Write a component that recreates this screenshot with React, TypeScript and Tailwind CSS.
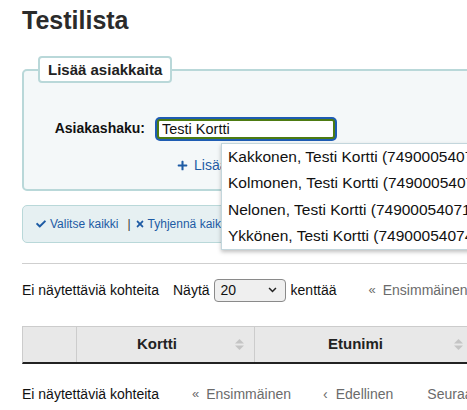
import { FaCheck, FaTimes, FaPlus } from "react-icons/fa";

const link = "text-[#1d5ba4]";

function SortIcon() {
  return (
    <svg width="9" height="11" viewBox="0 0 9 11" className="shrink-0">
      <path d="M4.5 0 L9 4.5 H0 Z" fill="#c4c4c4" />
      <path d="M4.5 11 L9 6.5 H0 Z" fill="#c4c4c4" />
    </svg>
  );
}

const suggestions = [
  "Kakkonen, Testi Kortti (74900054072)",
  "Kolmonen, Testi Kortti (74900054073)",
  "Nelonen, Testi Kortti (74900054071)",
  "Ykkönen, Testi Kortti (74900054074)",
];

export default function App() {
  return (
    <div
      className="w-[467px] h-[410px] overflow-hidden bg-white text-[#111]"
      style={{ fontFamily: '"Liberation Sans", Arial, sans-serif' }}
    >
      <div className="w-[720px] pl-[22px] pt-[6px]">
        <h1 className="text-[25px] leading-[28px] font-bold text-[#2b2b2b]">Testilista</h1>

        <fieldset className="relative mt-[22px] border-2 border-[#b9d8d9] rounded-[5px] bg-[#f4f8f9] px-0 pb-[14px]">
          <legend className="ml-[14px] border-2 border-[#b9d8d9] rounded-[4px] bg-white px-[8px] py-[3px] text-[15px] leading-[17px] font-bold text-[#222]">
            Lisää asiakkaita
          </legend>

          <div className="flex items-center mt-[35px]">
            <label className="w-[121px] text-right text-[14px] font-bold">Asiakashaku:</label>
            <div className="relative ml-[12px]">
              <input
                readOnly
                value="Testi Kortti"
                className="block w-[178px] h-[20px] border-2 border-[#4d7b12] rounded-[3px] bg-white pl-[3px] text-[14.5px] leading-[16px] text-[#111] ring-2 ring-[#1e5cb3] outline-none"
              />
              <div className="absolute left-[64px] top-[24px] z-10 w-[330px] border border-[#c3d6dc] bg-white shadow-[0_2px_4px_rgba(0,0,0,0.25)]">
                {suggestions.map((s) => (
                  <div key={s} className="h-[26.4px] pl-[6px] flex items-center text-[15.5px] whitespace-nowrap text-[#111]">
                    {s}
                  </div>
                ))}
              </div>
            </div>
          </div>

          <div className={`flex items-center gap-[6px] pl-[153px] mt-[16px] text-[14px] leading-[20px] ${link}`}>
            <FaPlus size={11} />
            <span>Lisää</span>
          </div>
        </fieldset>

        <div className="mt-[14px] h-[38px] border border-[#b9d8d9] rounded-[5px] bg-[#e6f0f2] flex items-center pl-[13px] text-[12px]">
          <span className={`flex items-center gap-[4px] ${link}`}>
            <FaCheck size={10} />
            Valitse kaikki
          </span>
          <span className="ml-[9px] mr-[4px] text-[#333]">|</span>
          <span className={`flex items-center gap-[3px] ${link}`}>
            <FaTimes size={10} />
            Tyhjennä kaikki
          </span>
        </div>

        <hr className="mt-[20px] border-t border-[#cfcfcf]" />

        <div className="flex items-center mt-[14px] h-[24px] text-[14px]">
          <span>Ei näytettäviä kohteita</span>
          <span className="ml-[14px]">Näytä</span>
          <div className="ml-[4px] w-[72px] h-[23px] border border-[#8a8a8a] rounded-[4px] bg-[#efefef] flex items-center justify-between pl-[6px] pr-[8px] text-[14px]">
            <span>20</span>
            <svg width="9" height="6" viewBox="0 0 10 7">
              <path d="M1 1.2 L5 5.2 L9 1.2" fill="none" stroke="#222" strokeWidth="1.8" />
            </svg>
          </div>
          <span className="ml-[5px]">kenttää</span>
          <span className="ml-[32px] flex items-center gap-[7px] text-[#6b6b6b]">
            <span className="text-[13px]">«</span>Ensimmäinen
          </span>
        </div>

        <div className="mt-[24px] flex h-[38px] border-t border-l border-[#cccccc] border-b-2 border-b-[#222] bg-[#e8e8e8]">
          <div className="w-[54px] border-r border-[#cccccc]" />
          <div className="w-[178px] border-r border-[#cccccc] flex items-center pl-[2px] pr-[10px]">
            <span className="flex-1 text-center text-[15px] font-bold text-[#222]">Kortti</span>
            <SortIcon />
          </div>
          <div className="w-[219px] border-r border-[#cccccc] flex items-center pl-[2px] pr-[10px]">
            <span className="flex-1 text-center text-[15px] font-bold text-[#222]">Etunimi</span>
            <SortIcon />
          </div>
        </div>

        <div className="flex items-center mt-[20px] h-[20px] text-[14px]">
          <span>Ei näytettäviä kohteita</span>
          <span className="ml-[33px] flex items-center gap-[7px] text-[#6b6b6b]">
            <span className="text-[13px]">«</span>Ensimmäinen
          </span>
          <span className="ml-[32px] flex items-center gap-[8px] text-[#6b6b6b]">
            <span>‹</span>Edellinen
          </span>
          <span className="ml-[34px] text-[#6b6b6b]">Seuraava ›</span>
        </div>
      </div>
    </div>
  );
}
